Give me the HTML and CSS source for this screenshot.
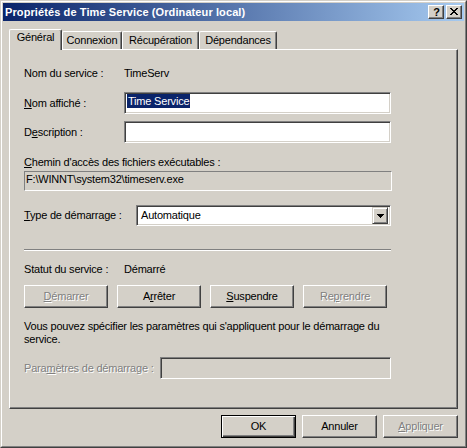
FILE: index.html
```html
<!DOCTYPE html>
<html lang="fr">
<head>
<meta charset="utf-8">
<title>Propriétés de Time Service</title>
<link rel="stylesheet" href="styles.css">
</head>
<body>
<div class="window">
  <div class="frame">
    <div class="titlebar">
      <span class="title">Propriétés de Time Service (Ordinateur local)</span>
      <div class="caption-btns">
        <div class="cap-btn help">?</div>
        <div class="cap-btn close">
          <svg width="8" height="7" viewBox="0 0 8 7" shape-rendering="crispEdges">
            <path d="M0 0h2v1h-2z M6 0h2v1h-2z M1 1h2v1h-2z M5 1h2v1h-2z M2 2h4v1h-4z M3 3h2v1h-2z M2 4h4v1h-4z M1 5h2v1h-2z M5 5h2v1h-2z M0 6h2v1h-2z M6 6h2v1h-2z" fill="#000"/>
          </svg>
        </div>
      </div>
    </div>
    <div class="client">
      <div class="tabs">
        <div class="tab selected">Général</div>
        <div class="tab tab-connexion">Connexion</div>
        <div class="tab tab-recup">Récupération</div>
        <div class="tab tab-dep">Dépendances</div>
      </div>
      <div class="panel">
        <div class="content">
          <div class="row row-service">
            <span class="label w100">Nom du service :</span>
            <span class="value">TimeServ</span>
          </div>
          <div class="row row-display">
            <span class="label w100"><u>N</u>om affiché :</span>
            <div class="edit edit-wide"><span class="sel">Time Service</span></div>
          </div>
          <div class="row row-desc">
            <span class="label w100">D<u>e</u>scription :</span>
            <div class="edit edit-wide"></div>
          </div>
          <div class="line-label row-path-label"><u>C</u>hemin d'accès des fichiers exécutables :</div>
          <div class="readonly row-path">F:\WINNT\system32\timeserv.exe</div>
          <div class="row row-type">
            <span class="label w112"><u>T</u>ype de démarrage :</span>
            <div class="combo">
              <span class="combo-text">Automatique</span>
              <div class="combo-btn">
                <svg width="7" height="4" viewBox="0 0 7 4" shape-rendering="crispEdges">
                  <path d="M0 0h7v1h-7z M1 1h5v1h-5z M2 2h3v1h-3z M3 3h1v1h-1z" fill="#000"/>
                </svg>
              </div>
            </div>
          </div>
          <div class="separator"></div>
          <div class="row row-status">
            <span class="label w100">Statut du service :</span>
            <span class="value">Démarré</span>
          </div>
          <div class="svc-buttons">
            <div class="btn btn-svc disabled"><u>D</u>émarrer</div>
            <div class="btn btn-svc">A<u>r</u>rêter</div>
            <div class="btn btn-svc"><u>S</u>uspendre</div>
            <div class="btn btn-svc disabled">Re<u>p</u>rendre</div>
          </div>
          <p class="info">Vous pouvez spécifier les paramètres qui s'appliquent pour le démarrage du<br>service.</p>
          <div class="row row-params">
            <span class="label w136 disabled-text">Para<u>m</u>ètres de démarrage :</span>
            <div class="edit edit-disabled"></div>
          </div>
        </div>
      </div>
      <div class="dlg-buttons">
        <div class="btn btn-dlg default">OK</div>
        <div class="btn btn-dlg">Annuler</div>
        <div class="btn btn-dlg disabled"><u>A</u>ppliquer</div>
      </div>
    </div>
  </div>
</div>
</body>
</html>
```

FILE: styles.css
```css
* { box-sizing: border-box; }

html, body {
  margin: 0;
  padding: 0;
  background: #d4d0c8;
}

body {
  font-family: "Liberation Sans", Arial, sans-serif;
  font-size: 11px;
  line-height: 13px;
  letter-spacing: -0.2px;
  color: #000;
}

.window {
  width: 467px;
  height: 448px;
  border: 1px solid;
  border-color: #d4d0c8 #404040 #404040 #d4d0c8;
  background: #d4d0c8;
}

.frame {
  height: 100%;
  border: 1px solid;
  border-color: #ffffff #808080 #808080 #ffffff;
  padding: 1px;
  display: flex;
  flex-direction: column;
}

.titlebar {
  height: 18px;
  flex: none;
  display: flex;
  align-items: center;
  justify-content: space-between;
  padding: 0 2px 0 2px;
  background: linear-gradient(to right, #0a246a, #a6caf0);
}

.title {
  color: #fff;
  font-weight: bold;
  line-height: 18px;
  letter-spacing: 0.1px;
  white-space: nowrap;
}

.caption-btns {
  display: flex;
  gap: 2px;
}

.cap-btn {
  width: 16px;
  height: 14px;
  background: #d4d0c8;
  border: 1px solid;
  border-color: #ffffff #404040 #404040 #ffffff;
  box-shadow: inset -1px -1px #808080;
  display: flex;
  align-items: center;
  justify-content: center;
}

.cap-btn.help {
  font-weight: bold;
  font-size: 11px;
  line-height: 12px;
  letter-spacing: 0;
  padding-left: 1px;
}

.cap-btn.close svg {
  display: block;
  margin-top: -1px;
}

.client {
  flex: 1;
  padding: 8px 6px 0 6px;
  display: flex;
  flex-direction: column;
}

.tabs {
  height: 20px;
  display: flex;
  align-items: flex-end;
}

.tab {
  height: 18px;
  padding-top: 2px;
  text-align: center;
  white-space: nowrap;
  border-top: 1px solid #fff;
  border-left: 1px solid #fff;
  border-right: 1px solid #404040;
  border-top-left-radius: 2px;
  border-top-right-radius: 2px;
  box-shadow: inset -1px 0 #808080;
  background: #d4d0c8;
}

.tab.selected {
  width: 53px;
  height: 21px;
  padding-top: 1px;
  margin-bottom: -1px;
  position: relative;
  z-index: 1;
}

.tab-connexion { width: 60px; }
.tab-recup { width: 77px; }
.tab-dep { width: 78px; }

.panel {
  height: 360px;
  flex: none;
  border-top: 1px solid #fff;
  border-left: 1px solid #fff;
  border-right: 1px solid #404040;
  border-bottom: 1px solid #404040;
  box-shadow: inset -1px -1px #808080;
  padding: 0 14px;
}

.content {
  width: 367px;
  display: flex;
  flex-direction: column;
}

.row {
  display: flex;
  align-items: center;
}

.label {
  flex: none;
  white-space: nowrap;
}

.w100 { width: 100px; }
.w112 { width: 112px; }
.w136 { width: 136px; }

.row-service { margin-top: 17px; height: 13px; }
.row-display { margin-top: 12px; }
.row-desc { margin-top: 7px; }
.row-path-label { margin-top: 13px; }
.row-path { margin-top: 2px; }
.row-type { margin-top: 14px; }
.separator { margin-top: 23px; }
.row-status { margin-top: 12px; height: 13px; }
.svc-buttons { margin-top: 9px; }
.info { margin: 12px 0 0 0; white-space: nowrap; }
.row-params { margin-top: 11px; }

.edit {
  flex: 1;
  height: 22px;
  background: #fff;
  border: 1px solid;
  border-color: #808080 #ffffff #ffffff #808080;
  box-shadow: inset 1px 1px #404040, inset -1px -1px #d4d0c8;
  padding: 1px 2px 0 2px;
  white-space: nowrap;
}

.edit-disabled {
  background: #d4d0c8;
}

.sel {
  display: inline-block;
  background: #0a246a;
  color: #fff;
  line-height: 14px;
  height: 14px;
  padding: 0 1px 0 1px;
}

.readonly {
  height: 20px;
  width: 368px;
  border: 1px solid;
  border-color: #808080 #ffffff #ffffff #808080;
  padding: 1px 1px 0 1px;
  white-space: nowrap;
}

.combo {
  flex: 1;
  height: 21px;
  background: #fff;
  border: 1px solid;
  border-color: #808080 #ffffff #ffffff #808080;
  box-shadow: inset 1px 1px #404040, inset -1px -1px #d4d0c8;
  padding: 1px;
  display: flex;
  align-items: center;
}

.combo-text {
  flex: 1;
  padding-left: 3px;
}

.combo-btn {
  width: 16px;
  height: 17px;
  margin-right: 1px;
  background: #d4d0c8;
  border: 1px solid;
  border-color: #d4d0c8 #404040 #404040 #d4d0c8;
  box-shadow: inset 1px 1px #fff, inset -1px -1px #808080;
  display: flex;
  align-items: center;
  justify-content: center;
}

.combo-btn svg {
  display: block;
}

.separator {
  height: 2px;
  border-top: 1px solid #808080;
  border-bottom: 1px solid #fff;
}

.value {
  white-space: nowrap;
}

.svc-buttons {
  display: flex;
  gap: 9px;
}

.btn {
  height: 23px;
  background: #d4d0c8;
  border: 1px solid;
  border-color: #ffffff #404040 #404040 #ffffff;
  box-shadow: inset -1px -1px #808080;
  display: flex;
  align-items: center;
  justify-content: center;
  white-space: nowrap;
}

.btn-svc { width: 84px; }
.btn-dlg { width: 75px; }

.btn.default {
  border-color: #000;
  box-shadow: inset 1px 1px #fff, inset -1px -1px #404040, inset -2px -2px #808080;
}

.disabled,
.disabled-text {
  color: #808080;
  text-shadow: 1px 1px 0 #fff;
}

.dlg-buttons {
  margin-top: 6px;
  display: flex;
  justify-content: flex-end;
  gap: 6px;
}
```
